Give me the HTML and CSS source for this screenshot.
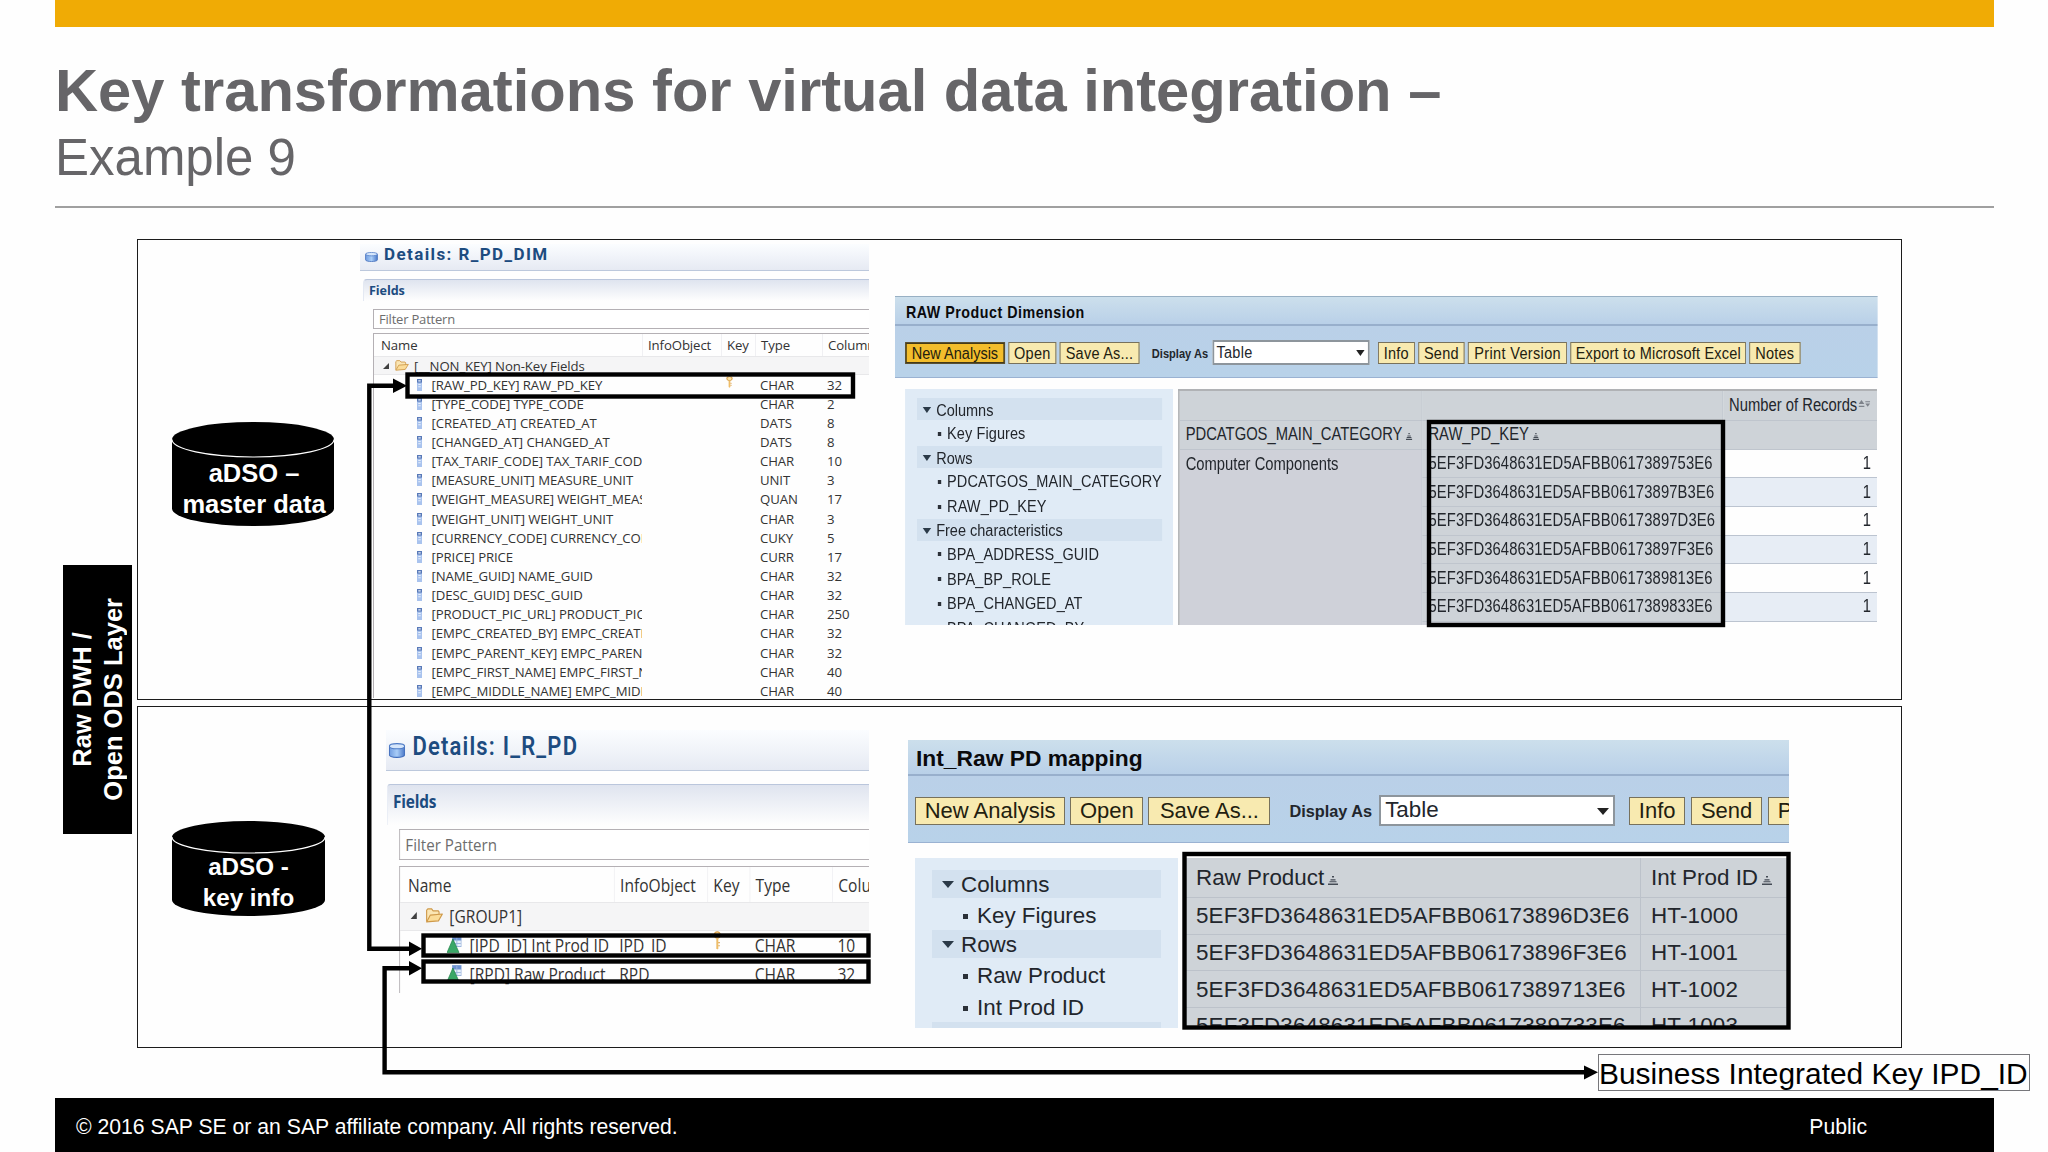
FILE: index.html
```html
<!DOCTYPE html>
<html lang="en">
<head>
  <meta charset="UTF-8" />
  <title>Key transformations for virtual data integration</title>
  <link rel="stylesheet" href="styles.css">
</head>
<body>
  <!-- shared icons -->
  <svg class="sprite" width="0" height="0">
    <defs>
      <linearGradient id="dbFill" x1="0" x2="1" y1="0" y2="0">
        <stop offset="0" stop-color="#6f9ce0"/>
        <stop offset=".5" stop-color="#a9cdf7"/>
        <stop offset="1" stop-color="#4a78c8"/>
      </linearGradient>
    </defs>
    <symbol id="db" viewBox="0 0 16 14" preserveAspectRatio="none">
      <path d="M.7 3v8c0 3.2 14.6 3.2 14.6 0V3z" fill="url(#dbFill)" stroke="#3f6cbb" stroke-width="1"/>
      <ellipse cx="8" cy="3" rx="7.3" ry="2.4" fill="#d5e6fb" stroke="#4f7cc6" stroke-width="1"/>
    </symbol>
    <symbol id="folder" viewBox="0 0 17 14" preserveAspectRatio="none">
      <path d="M1 12.5V2l1.2-1.2h3.6L7.3 2.6h4.9l.8 1v3" fill="#fbe6b4" stroke="#cf9a4b" stroke-width="1.1"/>
      <path d="M1 13 4.6 6.6 16.2 5.6 12.4 12z" fill="#fbdc98" stroke="#cf9a4b" stroke-width="1.1" stroke-linejoin="round"/>
    </symbol>
    <symbol id="field" viewBox="0 0 5 12" preserveAspectRatio="none">
      <rect width="5" height="12" fill="#a9c3ee"/>
      <rect width="5" height="3.6" fill="#5879b8"/>
      <path d="M1.3 1.2h2.4v1.2H1.3zM1.3 5h2.4v1H1.3zM1.3 7.3h2.4v1H1.3z" fill="#e6effc"/>
    </symbol>
    <symbol id="key" viewBox="0 0 8 18" preserveAspectRatio="none">
      <circle cx="4" cy="3.8" r="3" fill="#fbe2a6" stroke="#d9a04a" stroke-width="1.2"/>
      <path d="M3 7h2v9.5l-1 1-1-1z" fill="#eebd68"/>
      <path d="M5 11h1.5M5 14h1.5" stroke="#d9a04a"/>
    </symbol>
    <symbol id="char" viewBox="0 0 17 17" preserveAspectRatio="none">
      <rect x="6.5" y=".5" width="10" height="10" fill="#e8f0fc" stroke="#9db6dd"/>
      <rect x="6.5" y=".5" width="10" height="4" fill="#6d92d2"/>
      <path d="M11.5 1v9M7 7.5h9" stroke="#9db6dd"/>
      <path d="M7 3 14 16.5H.4z" fill="#3aa767" stroke="#1f7f45" stroke-width=".7"/>
    </symbol>
    <symbol id="sort" viewBox="0 0 10 9" preserveAspectRatio="none">
      <path d="M4 0h2v1.600H4zM2.500 3.200h5v1.300h-5zM1.500 5.300h7v1h-7zM0 7.500h10V9H0z" fill="#444b55"/>
    </symbol>
  </svg>

  <div class="slide">
    <div class="topbar"></div>

    <header class="title">
      <h1>Key transformations for virtual data integration –</h1>
      <h2>Example 9</h2>
    </header>

    <main class="board">
      <div class="layer"><span>Raw DWH /<br>Open ODS Layer</span></div>

      <div class="panels">
        <section class="panel panel-master">
          <div class="store store-master">
            <svg viewBox="0 0 162 104" width="162" height="104">
              <path d="M0 17.500a81 17.500 0 0 1 162 0v69a81 17.500 0 0 1-162 0z"/>
              <path class="rim" d="M0 17.500a81 17.500 0 0 0 162 0"/>
            </svg>
            <span>aDSO –<br>master data</span>
          </div>

          <div class="details details-dim">
            <div class="d-title"><svg><use href="#db"/></svg>Details: R_PD_DIM</div>
            <div class="d-fields">Fields</div>
            <div class="d-filter">Filter Pattern</div>
            <div class="d-table">
              <div class="d-row d-head"><span>Name</span><span>InfoObject</span><span>Key</span><span>Type</span><span>Column</span></div>
              <div class="d-group"><b></b><svg><use href="#folder"/></svg>[__NON_KEY] Non-Key Fields</div>
              <div class="d-row"><span><svg><use href="#field"/></svg>[RAW_PD_KEY] RAW_PD_KEY</span><span></span><span><svg class="key"><use href="#key"/></svg></span><span>CHAR</span><span>32</span></div>
              <div class="d-row"><span><svg><use href="#field"/></svg>[TYPE_CODE] TYPE_CODE</span><span></span><span></span><span>CHAR</span><span>2</span></div>
              <div class="d-row"><span><svg><use href="#field"/></svg>[CREATED_AT] CREATED_AT</span><span></span><span></span><span>DATS</span><span>8</span></div>
              <div class="d-row"><span><svg><use href="#field"/></svg>[CHANGED_AT] CHANGED_AT</span><span></span><span></span><span>DATS</span><span>8</span></div>
              <div class="d-row"><span><svg><use href="#field"/></svg>[TAX_TARIF_CODE] TAX_TARIF_CODE</span><span></span><span></span><span>CHAR</span><span>10</span></div>
              <div class="d-row"><span><svg><use href="#field"/></svg>[MEASURE_UNIT] MEASURE_UNIT</span><span></span><span></span><span>UNIT</span><span>3</span></div>
              <div class="d-row"><span><svg><use href="#field"/></svg>[WEIGHT_MEASURE] WEIGHT_MEASURE</span><span></span><span></span><span>QUAN</span><span>17</span></div>
              <div class="d-row"><span><svg><use href="#field"/></svg>[WEIGHT_UNIT] WEIGHT_UNIT</span><span></span><span></span><span>CHAR</span><span>3</span></div>
              <div class="d-row"><span><svg><use href="#field"/></svg>[CURRENCY_CODE] CURRENCY_CODE</span><span></span><span></span><span>CUKY</span><span>5</span></div>
              <div class="d-row"><span><svg><use href="#field"/></svg>[PRICE] PRICE</span><span></span><span></span><span>CURR</span><span>17</span></div>
              <div class="d-row"><span><svg><use href="#field"/></svg>[NAME_GUID] NAME_GUID</span><span></span><span></span><span>CHAR</span><span>32</span></div>
              <div class="d-row"><span><svg><use href="#field"/></svg>[DESC_GUID] DESC_GUID</span><span></span><span></span><span>CHAR</span><span>32</span></div>
              <div class="d-row"><span><svg><use href="#field"/></svg>[PRODUCT_PIC_URL] PRODUCT_PIC_URL</span><span></span><span></span><span>CHAR</span><span>250</span></div>
              <div class="d-row"><span><svg><use href="#field"/></svg>[EMPC_CREATED_BY] EMPC_CREATED_BY</span><span></span><span></span><span>CHAR</span><span>32</span></div>
              <div class="d-row"><span><svg><use href="#field"/></svg>[EMPC_PARENT_KEY] EMPC_PARENT_KEY</span><span></span><span></span><span>CHAR</span><span>32</span></div>
              <div class="d-row"><span><svg><use href="#field"/></svg>[EMPC_FIRST_NAME] EMPC_FIRST_NAME</span><span></span><span></span><span>CHAR</span><span>40</span></div>
              <div class="d-row"><span><svg><use href="#field"/></svg>[EMPC_MIDDLE_NAME] EMPC_MIDDLE_NAME</span><span></span><span></span><span>CHAR</span><span>40</span></div>
            </div>
          </div>

          <div class="query query-dim">
            <div class="q-title">RAW Product Dimension</div>
            <div class="q-tools">
              <span class="btn active">New Analysis</span><span class="btn">Open</span><span class="btn">Save As...</span>
              <span class="q-label">Display As</span><span class="combo">Table</span>
              <span class="btn">Info</span><span class="btn">Send</span><span class="btn print">Print Version</span><span class="btn export">Export to Microsoft Excel</span><span class="btn">Notes</span>
            </div>
            <div class="q-body">
              <div class="q-nav">
                <div class="nav-head">Columns</div>
                <div class="nav-item">Key Figures</div>
                <div class="nav-head">Rows</div>
                <div class="nav-item">PDCATGOS_MAIN_CATEGORY</div>
                <div class="nav-item">RAW_PD_KEY</div>
                <div class="nav-head">Free characteristics</div>
                <div class="nav-item">BPA_ADDRESS_GUID</div>
                <div class="nav-item">BPA_BP_ROLE</div>
                <div class="nav-item">BPA_CHANGED_AT</div>
                <div class="nav-item">BPA_CHANGED_BY</div>
              </div>
              <div class="q-grid">
                <span class="h"></span><span class="h"></span><span class="h rec">Number of Records<svg class="both" viewBox="0 0 12 7"><path d="M0 3.5 3 0l3 3.5zM0 5h6v1.2H0zM7 1h5v1H7zM7 3h5L9.500 6z"/></svg></span>
                <span class="h">PDCATGOS_MAIN_CATEGORY<svg><use href="#sort"/></svg></span><span class="h">RAW_PD_KEY<svg><use href="#sort"/></svg></span><span class="h"></span>
                <span class="m">Computer Components</span><span class="k">5EF3FD3648631ED5AFBB0617389753E6</span><span class="n">1</span>
                <span class="m"></span><span class="k">5EF3FD3648631ED5AFBB06173897B3E6</span><span class="n alt">1</span>
                <span class="m"></span><span class="k">5EF3FD3648631ED5AFBB06173897D3E6</span><span class="n">1</span>
                <span class="m"></span><span class="k">5EF3FD3648631ED5AFBB06173897F3E6</span><span class="n alt">1</span>
                <span class="m"></span><span class="k">5EF3FD3648631ED5AFBB0617389813E6</span><span class="n">1</span>
                <span class="m"></span><span class="k">5EF3FD3648631ED5AFBB0617389833E6</span><span class="n alt">1</span>
                <span class="m"></span><span class="m"></span><span></span>
              </div>
            </div>
          </div>
        </section>

        <section class="panel panel-key">
          <div class="store store-key">
            <svg viewBox="0 0 153 95" width="153" height="95">
              <path d="M0 16a76.500 16 0 0 1 153 0v63a76.500 16 0 0 1-153 0z"/>
              <path class="rim" d="M0 16a76.500 16 0 0 0 153 0"/>
            </svg>
            <span>aDSO -<br>key info</span>
          </div>

          <div class="details details-map">
            <div class="d-title"><svg><use href="#db"/></svg>Details: I_R_PD</div>
            <div class="d-fields">Fields</div>
            <div class="d-filter">Filter Pattern</div>
            <div class="d-table">
              <div class="d-row d-head"><span>Name</span><span>InfoObject</span><span>Key</span><span>Type</span><span>Column</span></div>
              <div class="d-group"><b></b><svg><use href="#folder"/></svg>[GROUP1]</div>
              <div class="d-row"><span><svg><use href="#char"/></svg>[IPD_ID] Int Prod ID</span><span>IPD_ID</span><span><svg class="key"><use href="#key"/></svg></span><span>CHAR</span><span>10</span></div>
              <div class="d-row"><span><svg><use href="#char"/></svg>[RPD] Raw Product</span><span>RPD</span><span></span><span>CHAR</span><span>32</span></div>
            </div>
          </div>

          <div class="query query-map">
            <div class="q-title">Int_Raw PD mapping</div>
            <div class="q-tools">
              <span class="btn">New Analysis</span><span class="btn">Open</span><span class="btn save">Save As...</span>
              <span class="q-label">Display As</span><span class="combo">Table</span>
              <span class="btn">Info</span><span class="btn">Send</span><span class="btn">Print Version</span>
            </div>
            <div class="q-body">
              <div class="q-nav">
                <div class="nav-head">Columns</div>
                <div class="nav-item">Key Figures</div>
                <div class="nav-head">Rows</div>
                <div class="nav-item">Raw Product</div>
                <div class="nav-item">Int Prod ID</div>
                <div class="nav-head"></div>
              </div>
              <div class="q-grid">
                <span class="h">Raw Product<svg><use href="#sort"/></svg></span><span class="h">Int Prod ID<svg><use href="#sort"/></svg></span>
                <span class="k">5EF3FD3648631ED5AFBB06173896D3E6</span><span class="k">HT-1000</span>
                <span class="k">5EF3FD3648631ED5AFBB06173896F3E6</span><span class="k">HT-1001</span>
                <span class="k">5EF3FD3648631ED5AFBB0617389713E6</span><span class="k">HT-1002</span>
                <span class="k">5EF3FD3648631ED5AFBB0617389733E6</span><span class="k">HT-1003</span>
              </div>
            </div>
          </div>
        </section>
      </div>
    </main>

    <footer class="footer">
      <span>© 2016 SAP SE or an SAP affiliate company. All rights reserved.</span>
      <span>Public</span>
    </footer>

    <!-- highlight frames and connectors -->
    <svg class="overlay" width="2048" height="1152" viewBox="0 0 2048 1152">
      <g class="line">
        <rect x="407.500" y="374.500" width="445.500" height="22"/>
        <rect x="1429" y="422" width="294" height="203"/>
        <rect x="423.500" y="935.500" width="445" height="20"/>
        <rect x="423.500" y="961.500" width="445" height="20"/>
        <rect x="1184.500" y="854" width="604" height="173.500"/>
        <path d="M394 385.700H369.300V948.700H410"/>
        <path d="M410 968.300H384.600V1072.300H1585"/>
      </g>
      <path d="M393 378.500 407 385.700 393 393zM409 941.500 422 948.700 409 956zM409 961 422 968.300 409 975.500zM1584 1065.500 1598 1072.300 1584 1079.500z"/>
    </svg>
    <div class="callout">Business Integrated Key IPD_ID</div>
  </div>
</body>
</html>
```
FILE: styles.css
```css
* {
  box-sizing: border-box;
}

body {
  margin: 0;
  background: #fff;
  font-family: "Liberation Sans", Arial, sans-serif;
}

.sprite {
  position: absolute;
}

.slide {
  position: relative;
  width: 2048px;
  height: 1152px;
  overflow: hidden;
  background: #fefefe;
  display: flex;
  flex-direction: column;
}

.topbar {
  height: 27px;
  margin: 0 54px 0 55px;
  flex: none;
  background: #f0ab05;
}

.title {
  height: 181px;
  margin: 0 54px 0 55px;
  padding-top: 29px;
  flex: none;
  border-bottom: 2px solid #a0a0a0;
  color: #666568;
}

.title h1 {
  margin: 0;
  font-size: 59.7px;
  line-height: 70px;
}

.title h2 {
  margin: 0;
  font-size: 51px;
  font-weight: normal;
  line-height: 63px;
}

.board {
  display: flex;
  height: 890px;
  flex: none;
  padding: 31px 0 0 63px;
}

/* vertical layer label */
.layer {
  width: 69px;
  height: 269px;
  margin: 326px 5px 0 0;
  background: #000;
  color: #fff;
  display: flex;
  align-items: center;
  justify-content: center;
}

.layer span {
  writing-mode: vertical-rl;
  transform: rotate(180deg);
  padding-top: 1px;
  font-size: 25.5px;
  font-weight: bold;
  line-height: 31px;
  text-align: center;
}

.panel {
  width: 1765px;
  display: flex;
  align-items: flex-start;
  border: 1px solid #1c1c1c;
  overflow: hidden;
}

.panel-master {
  height: 461px;
  margin-bottom: 6px;
}

.panel-key {
  height: 342px;
}

.store {
  display: grid;
  flex: none;
  color: #fff;
  font-weight: bold;
  font-size: 25.5px;
  line-height: 31px;
  text-align: center;
}

.store > * {
  grid-area: 1 / 1;
}

.store .rim {
  fill: none;
  stroke: #fff;
  stroke-width: 1.2;
}

.store-master {
  width: 162px;
  margin: 182px 26px 0 34px;
}

.store-master span {
  padding: 36px 0 0 2px;
}

.store-key {
  width: 153px;
  margin: 114px 61px 0 34px;
  font-size: 24.2px;
  line-height: 30.5px;
}

.store-key span {
  padding-top: 31px;
}

/* modelling tool screenshots */
.details {
  flex: none;
  overflow: hidden;
  font-family: "Open Sans", "Noto Sans", sans-serif;
  color: #333;
  white-space: nowrap;
  transform-origin: 0 0;
}

.d-title {
  display: flex;
  align-items: center;
  font-family: Roboto, sans-serif;
  font-weight: bold;
  color: #1d4c80;
  background: linear-gradient(#fbfdff, #e6eaf3);
  border-bottom: 1px solid #bcc8dc;
}

.d-fields {
  font-weight: bold;
  color: #1d4c80;
  background: linear-gradient(#dfe4ef, #fefefe);
  border-top: 1px solid #bac6dc;
  border-left: 1px solid #e4e9f3;
  border-top-left-radius: 4px;
}

.d-filter {
  border: 1px solid #b4b0b4;
  border-right: 0;
  color: #6d6d6d;
  background: #fff;
}

.d-table {
  border: 1px solid #b4b0b4;
  border-width: 1px 0 0 1px;
}

.d-row {
  display: grid;
}

.d-row > span {
  overflow: hidden;
  display: flex;
  align-items: center;
}

.d-head > span + span {
  border-left: 1px solid #f0f0f3;
}

.d-group {
  display: flex;
  align-items: center;
  background: #f5f5f6;
  border: 1px solid #e8e8ea;
  border-width: 1px 0;
}

.d-group b {
  border: solid transparent;
  border-width: 0 0 7px 7px;
  border-bottom-color: #404040;
}

.d-row svg,
.d-group svg,
.d-title svg {
  flex: none;
}

.details-dim {
  width: 509px;
  height: 454px;
  margin: 4px 26px 0 0;
  font-size: 13.2px;
  letter-spacing: -0.1px;
}

.details-dim .d-title {
  height: 27px;
  padding: 0 0 6px 5px;
  font-size: 17px;
  letter-spacing: 1.4px;
}

.details-dim .d-title svg {
  width: 13px;
  height: 10px;
  margin: 6px 6px 0 0;
}

.details-dim .d-fields {
  height: 22px;
  margin: 8px 0 0 3px;
  padding-left: 5px;
  font-size: 12.6px;
  line-height: 22px;
}

.details-dim .d-filter {
  height: 20px;
  margin: 8px 0 0 13px;
  padding-left: 5px;
  font-size: 13px;
  line-height: 19px;
  letter-spacing: -0.2px;
}

.details-dim .d-table {
  margin: 4px 0 0 13px;
}

.details-dim .d-row {
  grid-template-columns: 268px 79px 34px 67px 60px;
  height: 19.15px;
}

.details-dim .d-row > span {
  padding-left: 5px;
}

.details-dim .d-row > span:first-child {
  padding-left: 43px;
}

.details-dim .d-row svg {
  width: 5px;
  height: 12px;
  margin-right: 9.5px;
}

.details-dim .d-row .key {
  width: 7px;
  margin-bottom: 6px;
}

.details-dim .d-row.d-head {
  height: 22px;
}

.details-dim .d-row.d-head > span:first-child {
  padding-left: 7px;
}

.details-dim .d-group {
  height: 19px;
  padding-left: 9px;
}

.details-dim .d-group b {
  border-width: 0 0 6px 6px;
}

.details-dim .d-group svg {
  width: 14px;
  height: 11px;
  margin: 0 5px 0 6px;
}

/* drawn wider, then narrowed to 88% */
.details-map {
  width: 549px;
  height: 263px;
  margin: 23px -27px 0 0;
  font-size: 17.7px;
  transform: scaleX(0.88);
}

.details-map .d-title {
  height: 41px;
  padding: 0 0 8px 3px;
  font-size: 25px;
  font-weight: 600;
  letter-spacing: 1.35px;
}

.details-map .d-title svg {
  width: 19px;
  height: 15px;
  margin: 9px 8px 0 0;
}

.details-map .d-fields {
  height: 41px;
  margin: 13px 0 0 1px;
  padding-left: 6px;
  font-size: 17.5px;
  letter-spacing: -0.2px;
  line-height: 32px;
}

.details-map .d-filter {
  height: 31px;
  margin: 4px 0 0 15px;
  padding-left: 6px;
  line-height: 29px;
  font-size: 17.2px;
}

.details-map .d-table {
  height: 127px;
  margin: 6px 0 0 15px;
}

.details-map .d-row {
  grid-template-columns: 243px 106px 48px 94px 100px;
  height: 29px;
}

.details-map .d-row > span {
  padding: 0 0 2px 6px;
}

.details-map .d-row > span:first-child {
  padding-left: 53px;
}

.details-map .d-row svg {
  width: 17px;
  height: 17px;
  margin-right: 9px;
}

.details-map .d-row .key {
  width: 9px;
  height: 19px;
  margin: 0 0 8px 1px;
}

.details-map .d-row.d-head {
  height: 35px;
}

.details-map .d-row.d-head > span {
  padding-bottom: 0;
}

.details-map .d-row.d-head > span:first-child {
  padding-left: 9px;
}

.details-map .d-group {
  height: 29px;
  padding: 0 0 2px 12px;
}

.details-map .d-group svg {
  width: 20px;
  height: 15px;
  margin: 0 7px 0 10px;
}

/* query result screenshots */
.query {
  flex: none;
  overflow: hidden;
  color: #22262c;
  white-space: nowrap;
  transform-origin: 0 0;
}

.q-title {
  font-weight: bold;
  color: #0a0a0c;
  background: linear-gradient(#ccdfec, #b9d0e8);
  border-bottom: 2px solid #98afcc;
}

.q-tools {
  display: flex;
  align-items: center;
  background: linear-gradient(#bad0e8, #b8d2e9);
  border-bottom: 1px solid #9ab2d2;
}

.btn {
  flex: none;
  border: 1px solid #77705a;
  outline: 1px solid rgba(120, 115, 95, 0.4);
  outline-offset: -1px;
  background: #f8eab0;
  color: #22200f;
  text-align: center;
  overflow: hidden;
}

.btn.active {
  background: #f3bd2c;
  border: 2px solid #453a17;
}

.q-label {
  font-weight: bold;
}

.combo {
  position: relative;
  flex: none;
  background: #fff;
  border: 2px solid #8d959c;
}

.combo::after {
  content: "";
  position: absolute;
  right: 4px;
  top: 50%;
  margin-top: -3px;
  border: 5px solid transparent;
  border-top: 6px solid #222;
  border-bottom: 0;
}

.q-body {
  display: flex;
}

.q-nav {
  background: #e0ebf6;
  overflow: hidden;
}

.nav-head {
  display: flex;
  align-items: center;
  background: #d3e1ef;
}

.nav-head::before {
  content: "";
  border: 5px solid transparent;
  border-top: 6px solid #2b3a48;
  border-bottom: 0;
}

.nav-item {
  display: flex;
  align-items: center;
}

.nav-item::before {
  content: "";
  width: 4px;
  height: 4px;
  background: #2b3038;
}

.q-grid {
  display: grid;
  overflow: hidden;
}

.q-grid > span {
  display: flex;
  align-items: center;
}

.q-grid .h,
.q-grid .m,
.q-grid .k {
  background: #ced3d8;
}

.q-grid .m {
  background: #cfd1d9;
}

/* drawn wider, then narrowed to 84% */
.query-dim {
  width: 1170px;
  height: 330px;
  margin: 56px -190px 0 0;
  font-size: 17.3px;
  transform: scaleX(0.84);
}

.query-dim .q-title {
  height: 30px;
  padding-left: 13px;
  font-size: 17px;
  letter-spacing: 0.6px;
  line-height: 32px;
  border-top: 1px solid #98b0c4;
}

.query-dim .q-tools {
  height: 52px;
  padding: 2px 0 0 12px;
  gap: 4px;
}

.query-dim .btn {
  height: 22px;
  padding: 0 6px;
  line-height: 21px;
  letter-spacing: 0.28px;
}

.query-dim .btn.active {
  line-height: 19px;
  letter-spacing: 0;
}

.query-dim .btn.print {
  padding: 0 6.5px;
  letter-spacing: 0.4px;
}

.query-dim .btn.export {
  padding: 0 5px;
  letter-spacing: 0.22px;
}

.query-dim .q-label {
  margin: 2px 1px 0 11px;
  font-size: 13.2px;
}

.query-dim .combo {
  width: 187px;
  height: 25px;
  margin-right: 6px;
  padding-left: 3px;
  line-height: 20px;
  letter-spacing: 0.3px;
}

.query-dim .q-body {
  height: 236px;
  margin: 11px 0 0 12px;
  gap: 6px;
}

.query-dim .q-nav {
  width: 319px;
  padding: 9px 13px 0 14px;
}

.query-dim .nav-head {
  height: 22px;
  padding: 2px 0 0 7px;
}

.query-dim .nav-head::before {
  margin-right: 6px;
}

.query-dim .nav-item {
  height: 24.5px;
  padding: 1px 0 0 25px;
  letter-spacing: 0.1px;
}

.query-dim .nav-item::before {
  margin-right: 7px;
}

.query-dim .nav-head + .nav-item {
  height: 26px;
}

.query-dim .q-grid {
  width: 832px;
  grid-template-columns: 289px 358px 185px;
  grid-template-rows: 30px 28.7px repeat(6, 28.7px) 10px;
  border-top: 2px solid #b0b2b5;
  border-left: 2px solid #b0b2b5;
  font-size: 17.6px;
}

.query-dim .q-grid > span {
  padding-left: 7px;
}

.query-dim .q-grid .h,
.query-dim .q-grid .k {
  border: solid #bfc5cd;
  border-width: 0 1px 1px 0;
}

.query-dim .q-grid .m:nth-child(3n+1) {
  border-right: 1px solid #bfc5cd;
}

.query-dim .q-grid .k {
  letter-spacing: 0.15px;
}

.query-dim .q-grid .n {
  justify-content: flex-end;
  padding-right: 9px;
  border-bottom: 1px solid #bcc4d0;
}

.query-dim .q-grid .alt {
  background: #e7edf5;
}

.query-dim .q-grid svg {
  width: 8px;
  height: 7px;
  margin: 4px 0 0 4px;
}

.query-dim .q-grid .both {
  width: 14px;
  height: 8px;
  margin: -4px 0 0 1px;
  fill: #7d828a;
}

.query-map {
  width: 881px;
  height: 290px;
  margin: 33px 0 0 0;
  font-size: 22.4px;
}

.query-map .q-title {
  height: 36px;
  padding-left: 8px;
  font-size: 22.8px;
  line-height: 37px;
}

.query-map .q-tools {
  height: 67px;
  padding: 3px 0 0 7px;
  gap: 5px;
}

.query-map .btn {
  height: 28px;
  padding: 0 8.7px;
  font-size: 22px;
  line-height: 26px;
}

.query-map .btn.save {
  padding: 0 10.5px;
}

.query-map .q-label {
  margin: 2px 2px 0 14px;
  font-size: 16.3px;
}

.query-map .combo {
  width: 236px;
  height: 31px;
  margin-right: 9px;
  padding-left: 4px;
  line-height: 25px;
}

.query-map .combo::after {
  border-width: 7px 6px 0;
}

.query-map .combo ~ .btn + .btn {
  margin-left: 1px;
}

.query-map .q-body {
  height: 170px;
  margin: 15px 0 0 7px;
  gap: 8px;
}

.query-map .q-nav {
  width: 263px;
  flex: none;
  padding: 12px 17px 0;
}

.query-map .nav-head {
  height: 28px;
  padding: 1px 0 0 10px;
}

.query-map .nav-head::before {
  border-width: 7px 6.5px 0;
  margin-right: 7px;
}

.query-map .nav-item {
  height: 32px;
  padding: 4px 0 0 31px;
}

.query-map .nav-item::before {
  width: 5px;
  height: 5px;
  margin-right: 9px;
}

.query-map .q-grid {
  width: 604px;
  height: 168px;
  grid-template-columns: 455px 150px;
  grid-template-rows: 40px repeat(4, 36.7px);
}

.query-map .q-grid > span {
  padding: 1px 0 0 10px;
  border: solid #bcc2ca;
  border-width: 0 1px 1px 0;
}

.query-map .q-grid .k {
  letter-spacing: 0.16px;
}

.query-map .q-grid svg {
  width: 10px;
  height: 9px;
  margin: 4px 0 0 4px;
}

.footer {
  height: 54px;
  margin: 0 54px 0 55px;
  padding: 3px 127px 0 21px;
  background: #000;
  color: #fff;
  display: flex;
  align-items: center;
  justify-content: space-between;
  font-size: 21.2px;
}

.overlay {
  position: absolute;
  left: 0;
  top: 0;
}

.overlay .line {
  fill: none;
  stroke: #000;
  stroke-width: 4.4;
}

.callout {
  position: absolute;
  left: 1598px;
  top: 1054px;
  width: 432px;
  height: 37px;
  border: 1px solid #77777b;
  background: #fefefe;
  font-size: 29.9px;
  line-height: 38px;
  white-space: nowrap;
}
```
